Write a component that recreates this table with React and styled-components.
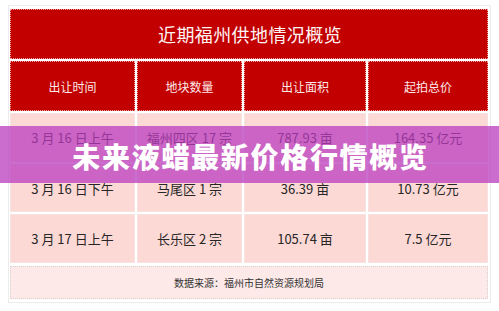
import styled, { createGlobalStyle } from 'styled-components';

const GlobalStyle = createGlobalStyle`
  html, body {
    margin: 0;
    padding: 0;
    background: #ffffff;
  }
  body {
    font-family: 'Noto Sans CJK SC', 'Noto Sans', sans-serif;
  }
`;

const rows = [
  ['3 月 16 日上午', '福州四区 17 宗', '787.93 亩', '164.35 亿元'],
  ['3 月 16 日下午', '马尾区 1 宗', '36.39 亩', '10.73 亿元'],
  ['3 月 17 日上午', '长乐区 2 宗', '105.74 亩', '7.5 亿元'],
];

const heads = ['出让时间', '地块数量', '出让面积', '起拍总价'];

const App = () => {
  return (
    <Page>
      <GlobalStyle />
      <Frame>
        <Table>
          <Title>近期福州供地情况概览</Title>
          {heads.map(h => (
            <HeadCell key={h}>{h}</HeadCell>
          ))}
          {rows.map((r, i) =>
            r.map((c, j) => <DataCell key={`${i}-${j}`}>{c}</DataCell>)
          )}
          <Footer>数据来源：福州市自然资源规划局</Footer>
        </Table>
      </Frame>
      <Banner>
        <BannerText>未来液蜡最新价格行情概览</BannerText>
      </Banner>
    </Page>
  );
};

export default App;

const Page = styled.div`
  position: relative;
  width: 499px;
  height: 311px;
  padding: 5px 0 0 8px;
  box-sizing: border-box;
  overflow: hidden;
`;

const Frame = styled.div`
  width: 483px;
  height: 298px;
  box-sizing: border-box;
  border: 1px solid #ececec;
  padding: 3px 1px 0 1px;
`;

const Table = styled.div`
  display: grid;
  grid-template-columns: 125px 105px 122px 120px;
  grid-template-rows: 50px 50px 49px 48px 49px 34px;
  gap: 2px;
  width: 480px;
`;

const Title = styled.div`
  grid-column: 1 / -1;
  background: #c20000;
  border: 1px dotted #f0a0a0;
  display: flex;
  align-items: center;
  justify-content: center;
  color: #fff4f4;
  font-size: 18px;
  letter-spacing: 0.4px;
  padding-left: 2px;
`;

const HeadCell = styled.div`
  background: #c20000;
  border: 1px dotted #f0a0a0;
  display: flex;
  align-items: center;
  justify-content: center;
  color: #fde8e8;
  font-size: 12px;
`;

const DataCell = styled.div`
  background: #fdd9d6;
  border: 1px solid #f6e2e0;
  display: flex;
  align-items: center;
  justify-content: center;
  color: #262626;
  font-size: 13px;
`;

const Footer = styled.div`
  grid-column: 1 / -1;
  margin-top: 1px;
  background: #fde9e8;
  border: 1px dotted #d8d0d0;
  display: flex;
  align-items: center;
  justify-content: center;
  color: #333333;
  font-size: 10px;
`;

const Banner = styled.div`
  position: absolute;
  left: 0;
  top: 126px;
  width: 499px;
  height: 57px;
  background: rgba(185, 60, 190, 0.75);
  display: flex;
  align-items: center;
  justify-content: center;
`;

const BannerText = styled.span`
  color: #ffffff;
  font-size: 28px;
  font-weight: 900;
  letter-spacing: 1.7px;
  margin-top: 2px;
  padding-left: 2px;
`;
